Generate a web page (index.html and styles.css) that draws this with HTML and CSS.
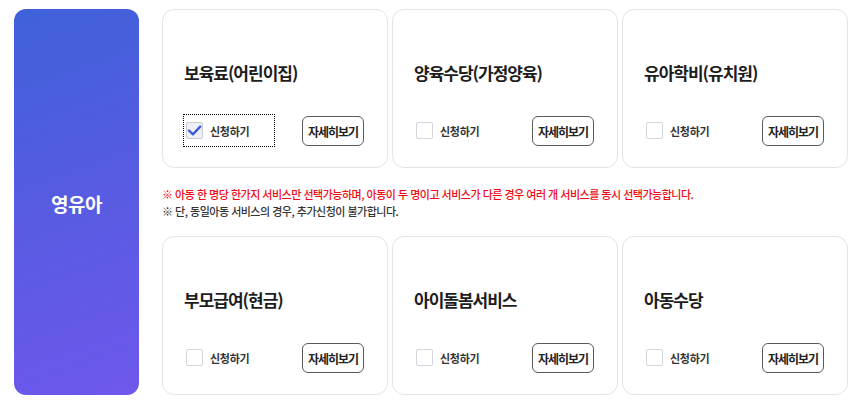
FILE: index.html
```html
<!DOCTYPE html>
<html lang="ko">
<head>
<meta charset="utf-8">
<title>영유아</title>
<link rel="stylesheet" href="styles.css">
</head>
<body>
<div class="page">
  <div class="side"><span>영유아</span></div>
  <div class="main">
    <div class="cards">
      <div class="card">
        <h3 class="title">보육료(어린이집)</h3>
        <div class="row">
          <label class="apply focused"><span class="box checked"><svg viewBox="0 0 17 17" width="17" height="17"><path d="M3 8.5 L7 12.3 L14.2 4.6" fill="none" stroke="#3b5bd9" stroke-width="2.4" stroke-linecap="round" stroke-linejoin="round"/></svg></span><span class="txt">신청하기</span></label>
          <button class="more">자세히보기</button>
        </div>
      </div>
      <div class="card">
        <h3 class="title">양육수당(가정양육)</h3>
        <div class="row">
          <label class="apply"><span class="box"></span><span class="txt">신청하기</span></label>
          <button class="more">자세히보기</button>
        </div>
      </div>
      <div class="card">
        <h3 class="title">유아학비(유치원)</h3>
        <div class="row">
          <label class="apply"><span class="box"></span><span class="txt">신청하기</span></label>
          <button class="more">자세히보기</button>
        </div>
      </div>
    </div>
    <div class="notice">
      <p class="red">※ 아동 한 명당 한가지 서비스만 선택가능하며, 아동이 두 명이고 서비스가 다른 경우 여러 개 서비스를 동시 선택가능합니다.</p>
      <p>※ 단, 동일아동 서비스의 경우, 추가신청이 불가합니다.</p>
    </div>
    <div class="cards">
      <div class="card">
        <h3 class="title">부모급여(현금)</h3>
        <div class="row">
          <label class="apply"><span class="box"></span><span class="txt">신청하기</span></label>
          <button class="more">자세히보기</button>
        </div>
      </div>
      <div class="card">
        <h3 class="title">아이돌봄서비스</h3>
        <div class="row">
          <label class="apply"><span class="box"></span><span class="txt">신청하기</span></label>
          <button class="more">자세히보기</button>
        </div>
      </div>
      <div class="card">
        <h3 class="title">아동수당</h3>
        <div class="row">
          <label class="apply"><span class="box"></span><span class="txt">신청하기</span></label>
          <button class="more">자세히보기</button>
        </div>
      </div>
    </div>
  </div>
</div>
</body>
</html>
```
FILE: styles.css
```css
* { box-sizing: border-box; }
html, body { margin: 0; padding: 0; background: #fff; }
body {
  font-family: "Noto Sans CJK KR", "Noto Sans", sans-serif;
  color: #222;
}
.page {
  display: flex;
  gap: 23px;
  padding: 9px 12px 6px 14px;
  height: 401px;
}
.side {
  width: 125px;
  flex: none;
  border-radius: 12px;
  background: linear-gradient(160deg, #3f61d9 0%, #5a5be3 55%, #6e58ec 100%);
  display: flex;
  align-items: center;
  justify-content: center;
  color: #fff;
  font-size: 19px;
  font-weight: 700;
  padding-top: 3px;
  letter-spacing: -0.5px;
}
.main {
  flex: 1;
  display: flex;
  flex-direction: column;
}
.cards {
  display: grid;
  grid-template-columns: repeat(3, 1fr);
  gap: 4px;
}
.card {
  height: 159px;
  border: 1px solid #e4e4e4;
  border-radius: 12px;
  padding: 50px 23px 22px 21px;
  display: flex;
  flex-direction: column;
}
.title {
  margin: 0;
  font-size: 17px;
  font-weight: 700;
  line-height: 26px;
  letter-spacing: -1px;
  color: #1d1d1d;
}
.row {
  margin-top: 30px;
  display: flex;
  justify-content: space-between;
  align-items: center;
}
.apply {
  display: flex;
  align-items: center;
  width: 90px;
  height: 31px;
  padding-left: 2px;
  margin-top: -1px;
}
.focused { outline: 1px dotted #000; }
.box {
  width: 17px;
  height: 17px;
  border: 1px solid #d3d6df;
  border-radius: 2px;
  background: #fff;
  display: flex;
  flex: none;
}
.box.checked {
  border-color: #c9ccd6;
  background: #eef0f5;
}
.box svg { margin: -1px; }
.txt {
  margin-left: 7px;
  font-size: 11px;
  font-weight: 700;
  color: #333;
  letter-spacing: -0.3px;
}
.more {
  width: 62px;
  height: 30px;
  border: 1px solid #5a5a5a;
  border-radius: 6px;
  background: #fff;
  font-family: inherit;
  font-size: 12px;
  font-weight: 700;
  color: #222;
  padding: 0;
  letter-spacing: -1px;
}
.notice {
  height: 68px;
  padding-top: 18px;
}
.notice p {
  margin: 0;
  font-size: 11px;
  line-height: 17px;
  color: #333;
  letter-spacing: -0.5px;
  font-weight: 500;
}
.notice p.red { color: #f00a14; }
```
